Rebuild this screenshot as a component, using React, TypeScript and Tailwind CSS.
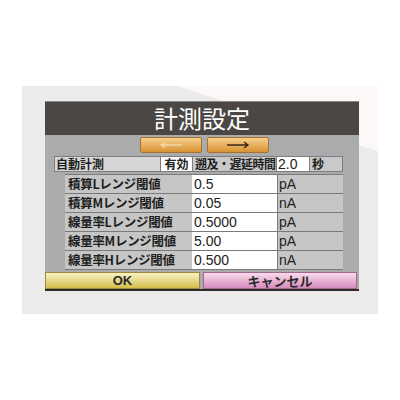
import React from 'react';

const jp = "font-['Noto_Sans_CJK_JP','Noto_Sans',sans-serif]";
const num = "font-['Liberation_Sans','Noto_Sans_CJK_JP',sans-serif]";

const rows = [
  { label: '積算Lレンジ閾値', value: '0.5', unit: 'pA' },
  { label: '積算Mレンジ閾値', value: '0.05', unit: 'nA' },
  { label: '線量率Lレンジ閾値', value: '0.5000', unit: 'pA' },
  { label: '線量率Mレンジ閾値', value: '5.00', unit: 'pA' },
  { label: '線量率Hレンジ閾値', value: '0.500', unit: 'nA' },
];

function Arrow({ dir, color }: { dir: 'left' | 'right'; color: string }) {
  const d = dir === 'right' ? 'M1 4 H22 M18 1 L22 4 L18 7' : 'M23 4 H2 M6 1 L2 4 L6 7';
  return (
    <svg width="24" height="8" viewBox="0 0 24 8" fill="none" stroke={color} strokeWidth="1.4">
      <path d={d} />
    </svg>
  );
}

export default function App() {
  return (
    <div className="w-[400px] h-[400px] bg-white pt-[86px] pl-[22px]">
      {/* PANEL */}
      <div className="w-[356px] h-[228px] pt-[15px] pl-[23px] bg-[linear-gradient(198deg,#fcf8f7_19%,#ebebeb_19%)]">
        {/* SCREEN */}
        <div className="w-[314px] h-[190px] flex flex-col bg-[#a9abad] border-b-2 border-[#2c2a29]">
          {/* TITLE */}
          <div className={`h-[34px] bg-[#4b4744] border-t border-[#8a8683] text-white text-[24px] leading-[32px] text-center ${jp}`}>
            計測設定
          </div>

          {/* ARROWS */}
          <div className="flex gap-[5px] pl-[95px] mt-[2px]">
            <div className="w-[62px] h-[16px] rounded-[2px] border border-[#a8722e] bg-gradient-to-b from-[#f6cf8a] to-[#d9922f] flex items-center justify-center">
              <Arrow dir="left" color="#f3d7a4" />
            </div>
            <div className="w-[62px] h-[16px] rounded-[2px] border border-[#a8722e] bg-gradient-to-b from-[#f6cf8a] to-[#d9922f] flex items-center justify-center">
              <Arrow dir="right" color="#3a2a1a" />
            </div>
          </div>

          {/* AUTO ROW */}
          <div className={`flex ml-[9px] mt-[3px] h-[16px] text-[12px] leading-[14px] font-bold text-[#1e1e1e] ${jp}`}>
            <div className="w-[107px] bg-[#d6d6d6] border border-[#7d7d7d] pl-[1px]">自動計測</div>
            <div className="w-[31px] bg-white border-y border-[#7d7d7d] text-center">有効</div>
            <div className="w-[85px] bg-[#c9c9c9] border border-[#7d7d7d] pl-[2px] tracking-[-0.5px]">遡及・遅延時間</div>
            <div className={`w-[32px] bg-white border-y border-[#7d7d7d] pl-[1px] text-[14px] font-normal ${num}`}>2.0</div>
            <div className="w-[34px] bg-[#c9c9c9] border border-[#7d7d7d] pl-[2px]">秒</div>
          </div>

          {/* THRESHOLD ROWS */}
          <div className="flex flex-col gap-px ml-[20px] mt-[2px] w-[278px] bg-[#7a7a7a] py-px">
            {rows.map(r => (
              <div key={r.label} className="flex h-[18px]">
                <div className={`w-[127px] bg-[#c6c6c6] pl-[3px] text-[12.5px] leading-[18px] font-bold text-[#1e1e1e] tracking-[-0.3px] ${jp}`}>
                  {r.label}
                </div>
                <div className={`w-[85px] bg-white pl-[2px] text-[14px] leading-[18px] text-[#222] ${num}`}>
                  {r.value}
                </div>
                <div className={`w-[66px] bg-[#c6c6c6] border-l border-[#7a7a7a] pl-[1px] text-[14px] leading-[18px] text-[#222] ${num}`}>
                  {r.unit}
                </div>
              </div>
            ))}
          </div>

          {/* BUTTONS */}
          <div className={`flex mt-auto h-[17px] text-[13px] leading-[16px] font-bold text-[#2a2a2a] ${jp}`}>
            <div className={`w-[155px] bg-gradient-to-b from-[#f8f3c4] to-[#d6bd45] border border-[#9c8a3a] text-center ${num}`}>
              OK
            </div>
            <div className="w-[154px] ml-[3px] bg-gradient-to-b from-[#f8dcec] to-[#d78cbd] border border-[#a0688a] text-center">
              キャンセル
            </div>
          </div>
        </div>
      </div>
    </div>
  );
}
